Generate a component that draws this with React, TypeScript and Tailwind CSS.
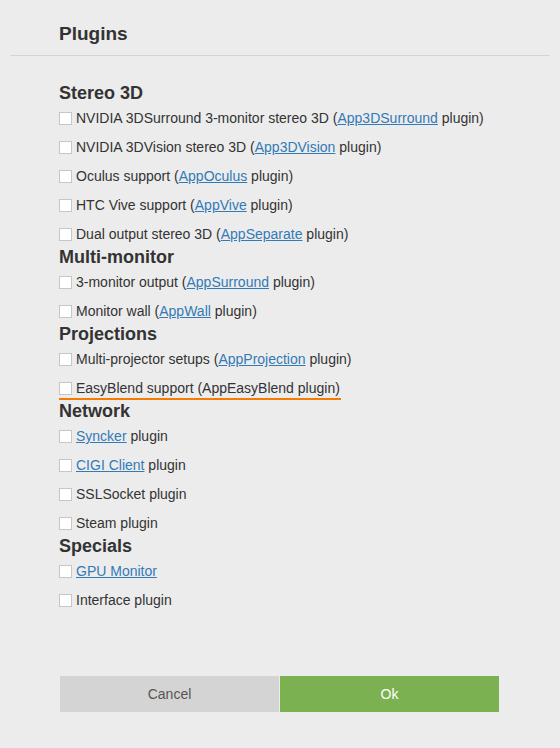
import React from 'react';

type Item = {
  before?: string;
  link?: string;
  after?: string;
  active?: boolean;
};

type Section = {
  title: string;
  items: Item[];
};

const sections: Section[] = [
  {
    title: 'Stereo 3D',
    items: [
      { before: 'NVIDIA 3DSurround 3-monitor stereo 3D (', link: 'App3DSurround', after: ' plugin)' },
      { before: 'NVIDIA 3DVision stereo 3D (', link: 'App3DVision', after: ' plugin)' },
      { before: 'Oculus support (', link: 'AppOculus', after: ' plugin)' },
      { before: 'HTC Vive support (', link: 'AppVive', after: ' plugin)' },
      { before: 'Dual output stereo 3D (', link: 'AppSeparate', after: ' plugin)' },
    ],
  },
  {
    title: 'Multi-monitor',
    items: [
      { before: '3-monitor output (', link: 'AppSurround', after: ' plugin)' },
      { before: 'Monitor wall (', link: 'AppWall', after: ' plugin)' },
    ],
  },
  {
    title: 'Projections',
    items: [
      { before: 'Multi-projector setups (', link: 'AppProjection', after: ' plugin)' },
      { before: 'EasyBlend support (AppEasyBlend plugin)', active: true },
    ],
  },
  {
    title: 'Network',
    items: [
      { link: 'Syncker', after: ' plugin' },
      { link: 'CIGI Client', after: ' plugin' },
      { before: 'SSLSocket plugin' },
      { before: 'Steam plugin' },
    ],
  },
  {
    title: 'Specials',
    items: [{ link: 'GPU Monitor' }, { before: 'Interface plugin' }],
  },
];

const PluginRow = ({ item }: { item: Item }) => (
  <div className="flex pt-[6px] pb-[1px]">
    <label
      className={`flex items-center leading-[20px] text-[14px] border-b-2 ${
        item.active ? 'border-[#f57c00]' : 'border-transparent'
      }`}
    >
      <span className="w-[13px] h-[13px] bg-white border border-[#c6c6c6] mr-[4px] shrink-0" />
      <span className="pr-[1px]">
        {item.before}
        {item.link && <a className="text-[#337ab7] underline cursor-pointer">{item.link}</a>}
        {item.after}
      </span>
    </label>
  </div>
);

export default function App() {
  return (
    <div
      className="h-[748px] w-full bg-[#ececec] text-[#333] flex flex-col"
      style={{ fontFamily: '"Liberation Sans", Arial, sans-serif' }}
    >
      {/* Header */}
      <div className="px-[59px] pt-[23px] pb-[10px]">
        <h1 className="text-[19px] leading-[22px] font-bold">Plugins</h1>
      </div>
      <div className="mx-[10px] h-px bg-[#d4d4d4]" />

      {/* Plugin list */}
      <div className="px-[59px] pt-[27px] flex-1">
        {sections.map((s) => (
          <div key={s.title}>
            <h2 className="pt-px text-[18px] leading-[18px] font-bold">{s.title}</h2>
            {s.items.map((it, i) => (
              <PluginRow key={i} item={it} />
            ))}
          </div>
        ))}
      </div>

      {/* Buttons */}
      <div className="px-[60px] pb-[36px] flex gap-px">
        <button className="w-[219px] h-[36px] bg-[#d4d4d4] text-[#555] text-[14px]">Cancel</button>
        <button className="w-[219px] h-[36px] bg-[#7cb151] text-white text-[14px]">Ok</button>
      </div>
    </div>
  );
}
